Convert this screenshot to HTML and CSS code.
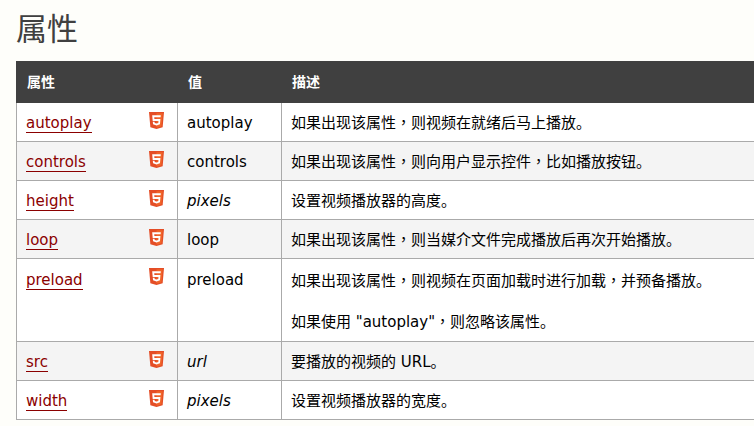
FILE: index.html
```html
<!DOCTYPE html>
<html lang="zh">
<head>
<meta charset="utf-8">
<title>属性</title>
<link rel="stylesheet" href="styles.css">
</head>
<body>
<svg class="defs" width="0" height="0" aria-hidden="true"><defs>
<symbol id="h5" viewBox="0 0 16 18">
<path fill="#e44d26" d="M0 0h16l-1.45 16.1L8 18l-6.55-1.9z"/>
<path fill="#f16529" d="M8 1.3v15.3l5.3-1.5 1.25-13.8z"/>
<path fill="#fff" d="M3.4 3.5h9.2l-.2 2H5.6l.15 2h6.45l-.5 5.6L8 14.2l-3.7-1.1-.25-2.8h1.9l.13 1.4 1.92.5 1.92-.5.2-2.2H3.95z"/>
</symbol>
</defs></svg>
<h1 class="title">属性</h1>
<table class="ref">
<colgroup><col class="c1"><col class="c2"><col class="c3"></colgroup>
<thead><tr><th>属性</th><th>值</th><th>描述</th></tr></thead>
<tbody>
<tr><td><a href="#">autoplay</a><svg class="h5"><use href="#h5"/></svg></td><td>autoplay</td><td>如果出现该属性<span class="cm" lang="zh-TW">，</span>则视频在就绪后马上播放。</td></tr>
<tr><td><a href="#">controls</a><svg class="h5"><use href="#h5"/></svg></td><td>controls</td><td>如果出现该属性<span class="cm" lang="zh-TW">，</span>则向用户显示控件<span class="cm" lang="zh-TW">，</span>比如播放按钮。</td></tr>
<tr><td><a href="#">height</a><svg class="h5"><use href="#h5"/></svg></td><td><i>pixels</i></td><td>设置视频播放器的高度。</td></tr>
<tr><td><a href="#">loop</a><svg class="h5"><use href="#h5"/></svg></td><td>loop</td><td>如果出现该属性<span class="cm" lang="zh-TW">，</span>则当媒介文件完成播放后再次开始播放。</td></tr>
<tr class="tall"><td><a href="#">preload</a><svg class="h5"><use href="#h5"/></svg></td><td>preload</td><td><p>如果出现该属性<span class="cm" lang="zh-TW">，</span>则视频在页面加载时进行加载<span class="cm" lang="zh-TW">，</span>并预备播放。</p><p>如果使用 "autoplay"<span class="cm" lang="zh-TW">，</span>则忽略该属性。</p></td></tr>
<tr><td><a href="#">src</a><svg class="h5"><use href="#h5"/></svg></td><td><i>url</i></td><td>要播放的视频的 URL。</td></tr>
<tr><td><a href="#">width</a><svg class="h5"><use href="#h5"/></svg></td><td><i>pixels</i></td><td>设置视频播放器的宽度。</td></tr>
</tbody>
</table>
</body>
</html>
```

FILE: styles.css
```css
html, body { margin: 0; height: 100%; overflow: hidden; }
body {
  background: #fefefa;
  color: #000;
  font-family: "DejaVu Sans", Verdana, "Noto Sans CJK SC", sans-serif;
  font-size: 15px;
  padding: 0 0 0 16px;
}
.defs { position: absolute; }
.title {
  margin: 0;
  padding: 11px 0 14px;
  font-size: 31px;
  font-weight: 400;
  line-height: 36px;
  color: #404040;
}
.ref {
  border-collapse: collapse;
  table-layout: fixed;
  width: 780px;
  line-height: 18px;
}
.c1 { width: 161px; }
.c2 { width: 104px; }
.ref th {
  background: #404040;
  color: #fff;
  font-size: 14px;
  font-weight: 700;
  text-align: left;
  height: 41px;
  padding: 0 10px;
  box-sizing: border-box;
  border: 1px solid #404040;
}
.ref td {
  position: relative;
  border: 1px solid #aaa;
  height: 39px;
  box-sizing: border-box;
  padding: 11px 10px 8px 9px;
  vertical-align: top;
  font-size: 15px;
}
.ref .tall td { padding-top: 12px; }
.ref tbody tr:nth-child(odd) td { background: #fff; }
.ref tbody tr:nth-child(even) td { background: #f4f4f4; }
.ref p { margin: 0 0 23px; }
.ref p:last-child { margin: 0 0 2px; }
.ref td:nth-child(3) p:first-child { padding-top: 1px; }
.cm { font-family: "Noto Sans CJK TC", sans-serif; line-height: 0; }
.ref a { color: #8b0000; text-decoration: none; border-bottom: 1px solid #8b0000; }
.h5 { position: absolute; top: 9px; right: 13px; width: 15px; height: 17px; }
```
